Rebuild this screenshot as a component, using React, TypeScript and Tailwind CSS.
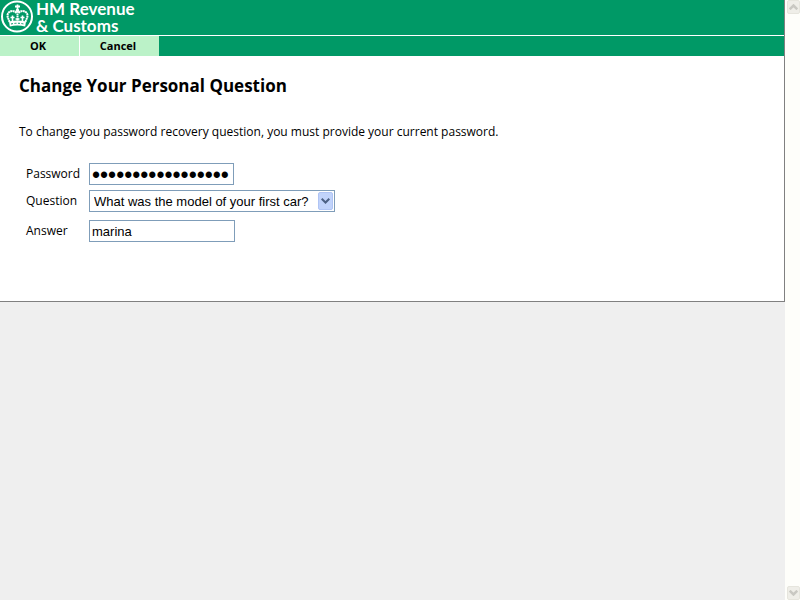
import { useState } from 'react';

function Crest() {
  return (
    <svg width="34" height="34" viewBox="0 0 34 34" fill="none" stroke="#fff" aria-hidden="true" className="shrink-0">
      <circle cx="17" cy="16.5" r="15" strokeWidth="2" />
      <path d="M15 6.500h5M17.500 4.500v5" strokeWidth="1.800" />
      <circle cx="17.500" cy="10.500" r="1.800" fill="#fff" stroke="none" />
      <path d="M17.500 11v10" strokeWidth="2" strokeDasharray="1.800 .6" />
      <path d="M16.500 13C13.500 9.500 7.500 11 7.500 15.500c0 2.500 1.500 4 2 6.500M18.500 13c3-3.500 9-2 9 2.500 0 2.500-1.500 4-2 6.500" strokeWidth="2" strokeDasharray="2 .4" />
      <path d="M10.500 17.500h4M12.500 15.500v6M20.500 17.500h4M22.500 15.500v6M15.500 19h4" strokeWidth="1.600" />
      <path d="M9 21.500q8.500-2 17 0l-.8 5q-7.700-1.800-15.400 0z" fill="#fff" stroke="none" />
      <path d="M11 24q6.500-1.500 13 0" stroke="#009966" strokeWidth="1" strokeDasharray="2 1.500" />
    </svg>
  );
}

function ScrollArrow({ down = false }: { down?: boolean }) {
  return (
    <button
      type="button"
      aria-label={down ? 'Scroll down' : 'Scroll up'}
      className="flex h-[14px] w-[13px] items-center justify-center rounded-xs border border-[#e6e5dd] bg-[#efeee8]"
    >
      <svg width="9" height="6" viewBox="0 0 9 6" fill="none" stroke="#c9c8c2" strokeWidth="2.500" aria-hidden="true">
        <path d={down ? 'M.7.7l3.800 3.800L8.300.7' : 'M.7 5.300l3.800-3.800 3.800 3.800'} />
      </svg>
    </button>
  );
}

export default function App() {
  const [password, setPassword] = useState('12345678901234567');
  const [answer, setAnswer] = useState('marina');
  const label = 'w-[63px] shrink-0 pl-[7px]';
  const field = 'h-[22px] border border-[#7f9db9] bg-white font-["Liberation_Sans",Arial,sans-serif] outline-none';

  return (
    <div className='flex min-h-screen bg-[#efefef] font-["Open_Sans","Noto_Sans",sans-serif] text-xs text-black'>
      <div className="min-w-0 flex-1">
        <div className="border-r border-b border-[#808080] bg-white">
          <header className="bg-[#009966]">
            <div className="flex h-[35px] items-start gap-[2px]">
              <Crest />
              <div className='font-["Lato",sans-serif] text-[17px] leading-[17px] font-bold text-white'>
                <div>HM Revenue</div>
                <div>&amp; Customs</div>
              </div>
            </div>
            <nav className="flex h-[21px] border-t border-white">
              <button type="button" className="w-[80px] border-r border-white bg-[#bbf2c8] pr-[3px] text-[11px] font-bold">
                OK
              </button>
              <button type="button" className="w-[79px] bg-[#bbf2c8] pr-[3px] text-[11px] font-bold">
                Cancel
              </button>
            </nav>
          </header>
          <main className="px-[19px] pt-[18px] pb-[59px]">
            <h1 className="text-[17px] leading-6 font-bold">Change Your Personal Question</h1>
            <p className="mt-[26px] leading-4">To change you password recovery question, you must provide your current password.</p>
            <form className="mt-[23px]" onSubmit={(e) => e.preventDefault()}>
              <div className="flex items-center">
                <label htmlFor="password" className={label}>Password</label>
                <input
                  id="password"
                  type="password"
                  value={password}
                  onChange={(e) => setPassword(e.target.value)}
                  className={`${field} ml-[7px] w-[145px] px-[2px] pt-[2px] text-[23px]`}
                />
              </div>
              <div className="mt-[5px] flex items-center">
                <label htmlFor="question" className={label}>Question</label>
                <div className="relative ml-[7px]">
                  <select id="question" className={`${field} w-[246px] appearance-none pt-px pl-1 text-[13px]`}>
                    <option>What was the model of your first car?</option>
                  </select>
                  <span className="pointer-events-none absolute top-[2px] right-[2px] flex h-[18px] w-[15px] items-center justify-center rounded-xs border border-[#b0c4f4] bg-[#c1d3fb]">
                    <svg width="9" height="6" viewBox="0 0 9 6" fill="none" stroke="#4d6185" strokeWidth="2" aria-hidden="true">
                      <path d="M.7.7l3.800 3.800L8.300.7" />
                    </svg>
                  </span>
                </div>
              </div>
              <div className="mt-2 flex items-center">
                <label htmlFor="answer" className={label}>Answer</label>
                <input
                  id="answer"
                  type="text"
                  value={answer}
                  onChange={(e) => setAnswer(e.target.value)}
                  className={`${field} ml-[7px] w-[146px] px-[2px] text-[13px]`}
                />
              </div>
            </form>
          </main>
        </div>
      </div>
      <aside className="flex w-[15px] flex-col items-end justify-between bg-[#fefefa]">
        <ScrollArrow />
        <ScrollArrow down />
      </aside>
    </div>
  );
}
